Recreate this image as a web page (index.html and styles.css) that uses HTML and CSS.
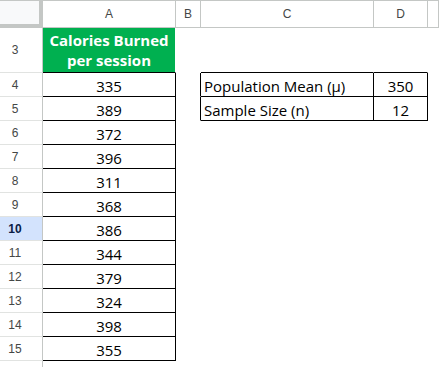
FILE: index.html
```html
<!DOCTYPE html>
<html>
<head>
<meta charset="utf-8">
<link rel="stylesheet" href="styles.css">
</head>
<body>
<div class="sheet">
  <!-- column headers -->
  <div class="cell corner"></div>
  <div class="cell colh">A</div>
  <div class="cell colh">B</div>
  <div class="cell colh">C</div>
  <div class="cell colh">D</div>
  <div class="cell colh"></div>

  <!-- row 3 -->
  <div class="cell rowh">3</div>
  <div class="cell title">Calories Burned<br>per session</div>
  <div class="cell"></div>
  <div class="cell btm"></div>
  <div class="cell btm"></div>
  <div class="cell"></div>

  <!-- row 4 -->
  <div class="cell rowh">4</div>
  <div class="cell num">335</div>
  <div class="cell edge"></div>
  <div class="cell box label">Population Mean (µ)</div>
  <div class="cell box val">350</div>
  <div class="cell"></div>

  <!-- row 5 -->
  <div class="cell rowh">5</div>
  <div class="cell num">389</div>
  <div class="cell edge"></div>
  <div class="cell box label">Sample Size (n)</div>
  <div class="cell box val">12</div>
  <div class="cell"></div>

  <div class="cell rowh">6</div><div class="cell num">372</div><div class="cell"></div><div class="cell"></div><div class="cell"></div><div class="cell"></div>
  <div class="cell rowh">7</div><div class="cell num">396</div><div class="cell"></div><div class="cell"></div><div class="cell"></div><div class="cell"></div>
  <div class="cell rowh">8</div><div class="cell num">311</div><div class="cell"></div><div class="cell"></div><div class="cell"></div><div class="cell"></div>
  <div class="cell rowh">9</div><div class="cell num">368</div><div class="cell"></div><div class="cell"></div><div class="cell"></div><div class="cell"></div>
  <div class="cell rowh sel">10</div><div class="cell num">386</div><div class="cell"></div><div class="cell"></div><div class="cell"></div><div class="cell"></div>
  <div class="cell rowh">11</div><div class="cell num">344</div><div class="cell"></div><div class="cell"></div><div class="cell"></div><div class="cell"></div>
  <div class="cell rowh">12</div><div class="cell num">379</div><div class="cell"></div><div class="cell"></div><div class="cell"></div><div class="cell"></div>
  <div class="cell rowh">13</div><div class="cell num">324</div><div class="cell"></div><div class="cell"></div><div class="cell"></div><div class="cell"></div>
  <div class="cell rowh">14</div><div class="cell num">398</div><div class="cell"></div><div class="cell"></div><div class="cell"></div><div class="cell"></div>
  <div class="cell rowh">15</div><div class="cell num">355</div><div class="cell"></div><div class="cell"></div><div class="cell"></div><div class="cell"></div>
  <div class="cell rowh"></div><div class="cell"></div><div class="cell"></div><div class="cell"></div><div class="cell"></div><div class="cell"></div>
</div>
</body>
</html>
```

FILE: styles.css
```css
html, body {
  margin: 0;
  padding: 0;
  background: #ffffff;
}

.sheet {
  display: grid;
  grid-template-columns: 43px 133px 25px 173px 54px 11px;
  grid-template-rows: 27px 45px repeat(12, 24px) 24px;
  border-top: 1px solid #c4c7c5;
  width: 439px;
  height: 366px;
  overflow: hidden;
  font-family: "Open Sans", "Liberation Sans", sans-serif;
  font-size: 15px;
  color: #000;
}

.cell {
  box-sizing: border-box;
  border-right: 1px solid transparent;
  border-bottom: 1px solid transparent;
  min-width: 0;
  overflow: hidden;
  white-space: nowrap;
}

.corner {
  background: #f8f9fa;
  border-right: 4px solid #c4c7c5;
  border-bottom: 4px solid #c4c7c5;
}

.colh {
  display: flex;
  align-items: center;
  justify-content: center;
  font-family: "Liberation Sans", Arial, sans-serif;
  font-size: 12px;
  color: #444746;
  border-right-color: #c4c7c5;
  border-bottom-color: #c4c7c5;
}

.rowh {
  display: flex;
  align-items: center;
  justify-content: center;
  padding-right: 12px;
  font-family: "Liberation Sans", Arial, sans-serif;
  font-size: 12px;
  color: #444746;
  border-right-color: #c4c7c5;
  border-bottom-color: #e1e3e1;
}

.rowh.sel {
  background: #d3e3fd;
  color: #0b1d45;
  font-weight: bold;
}

.title {
  background: #00b050;
  color: #ffffff;
  font-weight: bold;
  line-height: 20px;
  text-align: center;
  padding-top: 2px;
  border-right-color: #ffffff;
  border-bottom-color: #000000;
}

.btm {
  border-bottom-color: #000000;
}

.num {
  display: flex;
  align-items: flex-end;
  justify-content: center;
  line-height: 20px;
  border-right-color: #000000;
  border-bottom-color: #000000;
}

.edge {
  border-right-color: #000000;
}

.box {
  display: flex;
  align-items: flex-end;
  line-height: 20px;
  border-right-color: #000000;
  border-bottom-color: #000000;
}

.label {
  padding-left: 3px;
}

.val {
  justify-content: center;
}
```
